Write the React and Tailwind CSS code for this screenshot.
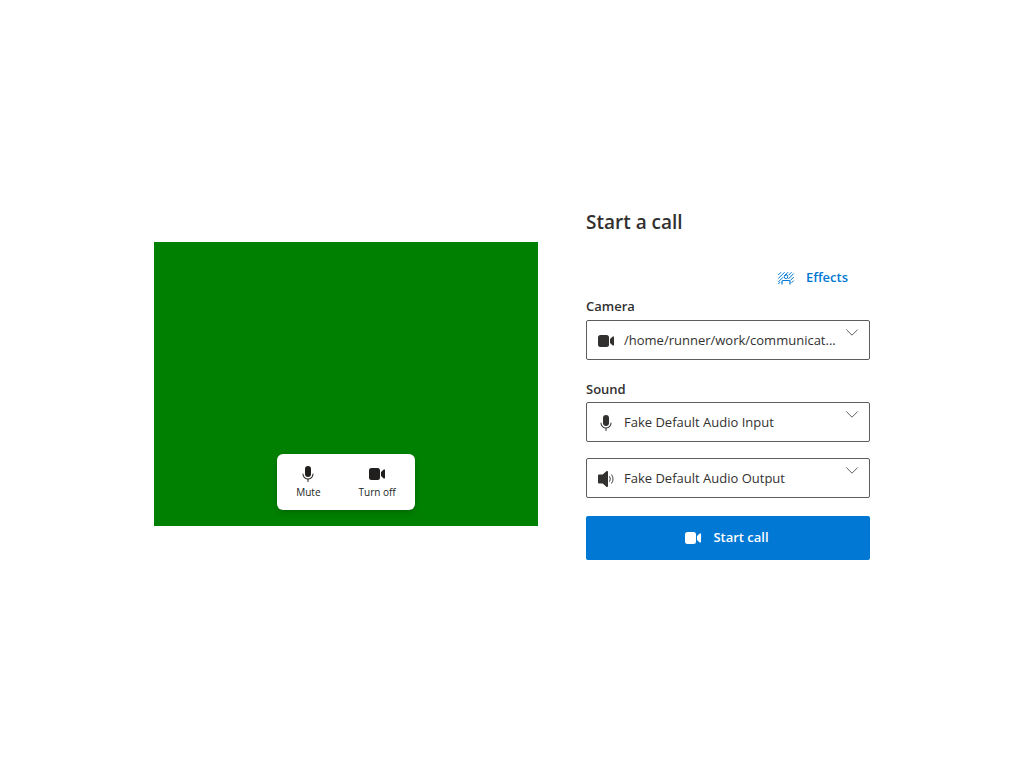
import React from 'react';

function Icon({ children }) {
  return (
    <svg viewBox="0 0 20 20" fill="currentColor" className="size-5 shrink-0" aria-hidden="true">
      {children}
    </svg>
  );
}

function VideoIcon() {
  return (
    <Icon>
      <path d="M13 6.5A2.5 2.5 0 0 0 10.5 4h-6A2.5 2.5 0 0 0 2 6.5v7A2.5 2.5 0 0 0 4.5 16h6a2.5 2.5 0 0 0 2.5-2.5v-7Zm1 1.43v4.15l2.76 2.35a.75.75 0 0 0 1.24-.57V6.13a.75.75 0 0 0-1.24-.57L14 7.93Z" />
    </Icon>
  );
}

function MicIcon() {
  return (
    <Icon>
      <path d="M10 13a3 3 0 0 0 3-3V5a3 3 0 0 0-6 0v5a3 3 0 0 0 3 3Z" />
      <path d="M5 9.5c.28 0 .5.22.5.5a4.5 4.5 0 0 0 9 0 .5.5 0 0 1 1 0 5.5 5.5 0 0 1-5 5.48v2.02a.5.5 0 0 1-1 0v-2.02A5.5 5.5 0 0 1 4.5 10c0-.28.22-.5.5-.5Z" />
    </Icon>
  );
}

function SpeakerIcon() {
  return (
    <Icon>
      <path d="M12 2.9v14.2c0 .9-1.05 1.33-1.68.72L6.7 14.5H3a1 1 0 0 1-1-1v-7a1 1 0 0 1 1-1h3.7l3.62-3.32A1 1 0 0 1 12 2.9Z" />
      <path
        d="M13.7 7.6a4.6 4.6 0 0 1 0 4.8M15.7 5.8a7.4 7.4 0 0 1 0 8.4"
        fill="none"
        stroke="currentColor"
        strokeWidth="0.9"
        strokeLinecap="round"
      />
    </Icon>
  );
}

function EffectsIcon() {
  return (
    <Icon>
      <g fill="none" stroke="currentColor" strokeLinecap="round">
        <path d="M2.5 6.8 4.8 4.5M2.5 10.3 8.3 4.5M2.5 13.8l4.3-4.3M8.7 7.6l3.1-3.1M12.8 7l2.5-2.5M12.7 10.6l4.8-4.8M14.5 12.3l3-3M15.8 14.5l1.7-1.7M2.5 15.8l1.5-1.5" />
        <rect x="8.3" y="6.8" width="3.4" height="3.8" rx="1.6" />
        <path d="M6 16v-2.2a1.3 1.3 0 0 1 1.3-1.3h5.4a1.3 1.3 0 0 1 1.3 1.3V16" strokeWidth="1.2" />
      </g>
    </Icon>
  );
}

function DeviceSelect({ id, label, icon, value }) {
  return (
    <div className="relative text-[#323130]">
      <span className="pointer-events-none absolute top-[11px] left-[10px]">{icon}</span>
      <select
        id={id}
        aria-label={label}
        className="block h-10 w-full appearance-none truncate rounded-xs border border-[#605e5c] bg-white pt-0.5 pr-7 pl-[37px] text-[13px]"
      >
        <option>{value}</option>
      </select>
      <svg
        viewBox="0 0 12 7"
        fill="none"
        stroke="#605e5c"
        className="pointer-events-none absolute top-[9px] right-3 h-[7px] w-3"
        aria-hidden="true"
      >
        <path d="M.3.5 6 6.2 11.7.5" />
      </svg>
    </div>
  );
}

function ToolbarButton({ icon, children }) {
  return (
    <button type="button" className="flex h-14 flex-col items-center justify-center px-[19px] text-[10px] leading-4 text-[#201f1e]">
      {icon}
      {children}
    </button>
  );
}

export default function App() {
  return (
    <main className="flex min-h-screen flex-wrap items-center justify-center gap-12 bg-white font-['Open_Sans','Noto_Sans',sans-serif] text-[13px] text-[#323130]">
      <section aria-label="Local preview" className="flex min-h-71 w-full max-w-96 items-end justify-center bg-[#008000] pb-4">
        <div className="flex rounded-md bg-white shadow-[0_3px_7px_rgba(0,0,0,0.13),0_1px_2px_rgba(0,0,0,0.11)]">
          <ToolbarButton icon={<MicIcon />}>Mute</ToolbarButton>
          <ToolbarButton icon={<VideoIcon />}>Turn off</ToolbarButton>
        </div>
      </section>

      <section className="flex w-full max-w-71 flex-col">
        <h1 className="text-[19px] leading-7 font-semibold">Start a call</h1>
        <button type="button" className="mt-[26px] mr-[22px] flex h-8 items-center gap-2.5 self-end font-semibold text-[#0078d4]">
          <EffectsIcon />
          Effects
        </button>

        <label htmlFor="camera" className="mt-0.5 mb-1 leading-5 font-semibold">Camera</label>
        <DeviceSelect id="camera" label="Camera" icon={<VideoIcon />} value="/home/runner/work/communicat..." />

        <label htmlFor="microphone" className="mt-[19px] mb-[3px] leading-5 font-semibold">Sound</label>
        <div className="flex flex-col gap-4">
          <DeviceSelect id="microphone" label="Microphone" icon={<MicIcon />} value="Fake Default Audio Input" />
          <DeviceSelect id="speaker" label="Speaker" icon={<SpeakerIcon />} value="Fake Default Audio Output" />
        </div>

        <button type="button" className="mt-[18px] flex h-11 items-center justify-center gap-2.5 rounded-xs bg-[#0078d4] pr-1 font-semibold text-white">
          <VideoIcon />
          Start call
        </button>
      </section>
    </main>
  );
}
